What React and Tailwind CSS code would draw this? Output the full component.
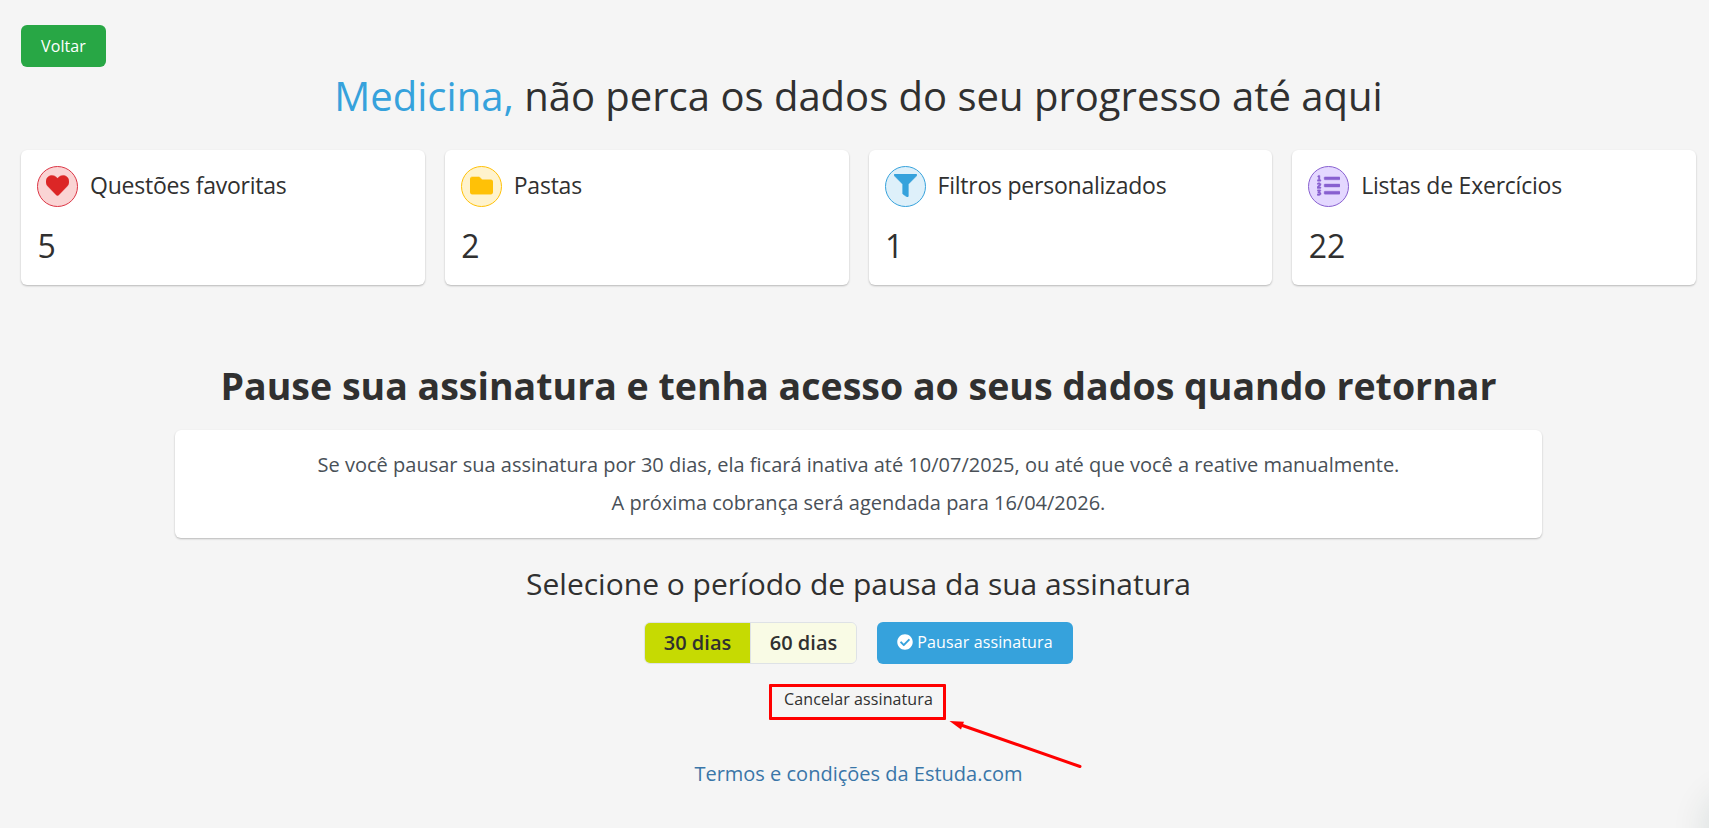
import React from 'react';
import { FaHeart, FaFolder, FaFilter, FaListOl, FaCheckCircle } from 'react-icons/fa';

const stats = [
  { label: 'Questões favoritas', value: 5, icon: FaHeart, color: 'text-[#dc2626] bg-[#fad4d4] border-[#dc3545]' },
  { label: 'Pastas', value: 2, icon: FaFolder, color: 'text-[#ffc107] bg-[#fff3cd] border-[#ffc107]' },
  { label: 'Filtros personalizados', value: 1, icon: FaFilter, color: 'text-[#36a2dc] bg-[#def0fa] border-[#36a2dc]' },
  { label: 'Listas de Exercícios', value: 22, icon: FaListOl, color: 'text-[#8860d0] bg-[#e4d8ff] border-[#8860d0]' },
];

const StatCard = ({ label, value, icon: Icon, color }) => (
  <div className="h-[135px] rounded-md bg-white p-4 shadow-[0_1px_2px_rgba(0,0,0,0.25)]">
    <div className="flex">
      <div className={`flex h-[41px] w-[41px] justify-center rounded-full border pt-[7px] ${color}`}>
        <Icon className="h-[23px] w-[23px] stroke-current stroke-[10]" />
      </div>
      <h4 className="ml-3 text-[23px] leading-[38px] tracking-[-0.23px]">{label}</h4>
    </div>
    <p className="mt-[19px] pl-[0.5px] text-[32px] leading-10">{value}</p>
  </div>
);

const App = () => {
  return (
    <div className="relative h-[828px] overflow-hidden bg-[#f5f5f5] pt-[25px] pr-[13px] pl-[21px] font-['Open_Sans',sans-serif] text-[#303030]">
      <button className="block h-[42px] w-[85px] rounded-md bg-[#28a745] text-base tracking-[0.1px] text-white">Voltar</button>

      <h1 className="mt-[5px] text-center text-[40px] leading-[48px]">
        <span className="text-[#36a2dc]">Medicina,</span> não perca os dados do seu progresso até aqui
      </h1>

      <div className="mt-[30px] grid grid-cols-4 gap-5">
        {stats.map((stat) => (
          <StatCard key={stat.label} {...stat} />
        ))}
      </div>

      <div className="flex flex-col items-center text-center">
        <h2 className="mt-[78px] text-[37.5px] leading-[46px] font-bold">
          Pause sua assinatura e tenha acesso ao seus dados quando retornar
        </h2>

        <div className="mt-[21px] h-[108px] w-[1367px] rounded-md bg-white pt-4 text-xl leading-[38px] text-[#495057] shadow-[0_1px_2px_rgba(0,0,0,0.25)]">
          <p>Se você pausar sua assinatura por 30 dias, ela ficará inativa até 10/07/2025, ou até que você a reative manualmente.</p>
          <p>A próxima cobrança será agendada para 16/04/2026.</p>
        </div>

        <h3 className="mt-7 text-[30px] leading-9">Selecione o período de pausa da sua assinatura</h3>

        <div className="mt-5 flex gap-5">
          <div className="flex h-[42px] w-[213px] overflow-hidden rounded-md border border-[#dee2e6] text-xl font-semibold">
            <button className="flex-1 bg-[#c6da02]">30 dias</button>
            <button className="flex-1 border-l border-[#dee2e6] bg-[#f9fbe5]">60 dias</button>
          </div>
          <button className="flex h-[42px] w-[196px] items-center justify-center gap-1 rounded-md bg-[#36a2dc] pb-0.5 text-base tracking-[0.12px] text-white">
            <FaCheckCircle className="h-4 w-4" />
            Pausar assinatura
          </button>
        </div>

        {/* Highlighted cancel link with its arrow */}
        <div className="relative mt-5 mr-0.5 h-9 w-[177px] rounded-[1px] border-[3px] border-[#ff0000]">
          <button className="block w-full pl-0.5 text-base leading-6 tracking-[0.1px]">Cancelar assinatura</button>
          <svg className="absolute top-[33px] left-[177px]" width="136" height="52" viewBox="0 0 136 52" fill="#ff0000">
            <path d="M12 5 L131 46.500" stroke="#ff0000" strokeWidth="3" strokeLinecap="round" />
            <path d="M0.500 1 L15 1.700 L12 9.500 Z" />
          </svg>
        </div>

        <a href="#" className="mt-[39px] text-xl leading-[30px] text-[#3a76a8]">
          Termos e condições da Estuda.com
        </a>
      </div>

      {/* Glow of the chat bubble that sits past the right edge */}
      <div className="absolute -right-[62px] -bottom-[30px] h-[60px] w-[60px] rounded-full shadow-[0_0_36px_6px_rgba(0,60,50,0.12)]" />
    </div>
  );
};

export default App;
